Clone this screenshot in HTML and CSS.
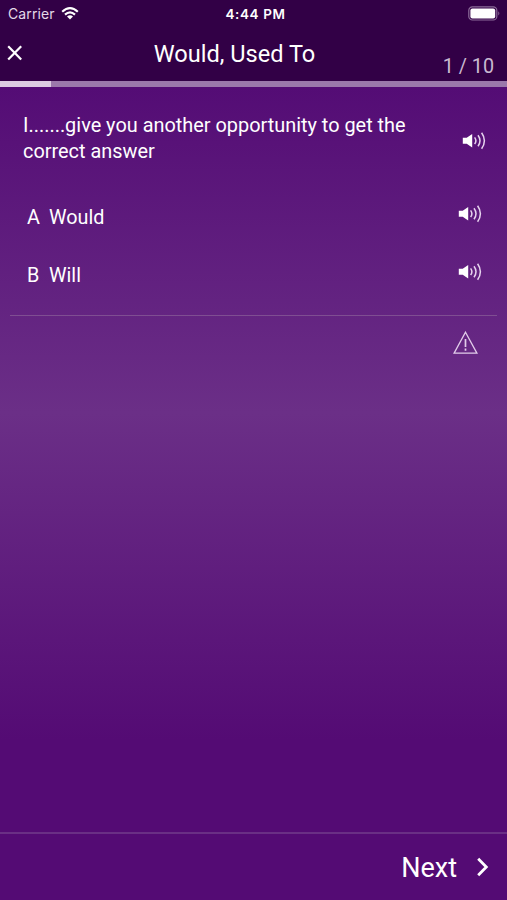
FILE: index.html
```
<!DOCTYPE html>
<html lang="en">
<head>
<meta charset="UTF-8">
<meta name="viewport" content="width=device-width, initial-scale=1.0">
<title>Would, Used To</title>
<link rel="stylesheet" href="styles.css">
</head>
<body>

<svg width="0" height="0" class="defs">
  <symbol id="speaker" viewBox="0 0 24 20">
    <path d="M0.8 6.8H4.7L10.2 3V16.4L4.7 12.8H0.8Z" fill="#fff"/>
    <path d="M12.6 6.4Q15.2 9.7 12.6 13M16 4.2Q20 9.7 16 15.2M19.6 1.8Q25.2 9.7 19.6 17.8" fill="none" stroke="#e6d3ee" stroke-width="1.5"/>
  </symbol>
</svg>

<div class="app">
  <header class="header">
    <div class="status-bar">
      <div class="carrier">
        <span>Carrier</span>
        <svg class="wifi" width="18" height="13" viewBox="0 0 18 13">
          <path d="M1.2 4.7Q9-2.3 16.8 4.7M4 7.6Q9 3.2 14 7.6" fill="none" stroke="#fff" stroke-width="2.2"/>
          <path d="M6 9.5Q9 7 12 9.5L9 12.6Z" fill="#fff"/>
        </svg>
      </div>
      <span class="time">4:44 PM</span>
      <svg class="battery" width="33" height="15" viewBox="0 0 33 15">
        <rect x="0.8" y="0.8" width="28" height="13.2" rx="3.6" fill="none" stroke="#8c6b99" stroke-width="1.2"/>
        <rect x="2.4" y="2.4" width="24.8" height="10" rx="2" fill="#fff"/>
        <path d="M30.3 5.2Q32.4 7.4 30.3 9.6Z" fill="#8c6b99"/>
      </svg>
    </div>
    <div class="title-bar">
      <svg class="close" width="16" height="16" viewBox="0 0 16 16">
        <path d="M1.2 1.2L14.2 14.6M14.2 1.2L1.2 14.6" fill="none" stroke="#fff" stroke-width="2.2"/>
      </svg>
      <h1 class="title">Would, Used To</h1>
      <span class="counter">1 / 10</span>
    </div>
    <div class="progress"><div class="progress-value" style="width: 10.1%"></div></div>
  </header>

  <main class="content">
    <div class="question">
      <p class="question-text">I.......give you another opportunity to get the correct answer</p>
      <svg class="speaker" width="24" height="20"><use href="#speaker"/></svg>
    </div>
    <div class="answer">
      <span class="letter">A</span>
      <span class="answer-text">Would</span>
      <svg class="speaker" width="24" height="20"><use href="#speaker"/></svg>
    </div>
    <div class="answer">
      <span class="letter">B</span>
      <span class="answer-text">Will</span>
      <svg class="speaker" width="24" height="20"><use href="#speaker"/></svg>
    </div>
    <div class="report">
      <svg width="26" height="24" viewBox="0 0 26 24">
        <path d="M12.5 1.2L23.9 22.2H1.1Z" fill="none" stroke="#e2cdea" stroke-width="1.3"/>
        <path d="M12.5 8V16M12.5 17.6V19.8" fill="none" stroke="#e2cdea" stroke-width="1.7"/>
      </svg>
    </div>
  </main>

  <footer class="footer">
    <span class="next">Next</span>
    <svg class="arrow" width="12" height="20" viewBox="0 0 12 20">
      <path d="M1.2 1.8L9.3 10L1.2 18.2" fill="none" stroke="#fff" stroke-width="2.8"/>
    </svg>
  </footer>
</div>

</body>
</html>
```
FILE: styles.css
```
* {
  box-sizing: border-box;
}
body {
  margin: 0;
  font-family: Roboto, "Liberation Sans", sans-serif;
  color: #fff;
}
svg {
  display: block;
  flex: none;
}
.defs {
  position: absolute;
}
.app {
  display: flex;
  flex-direction: column;
  height: 900px;
  background: linear-gradient(#540c75 87px, #6b2f87 413px, #540b74 740px);
}
.header {
  height: 87px;
  background: #320046;
}
.status-bar {
  display: grid;
  grid-template-columns: 1fr auto 1fr;
  align-items: center;
  height: 27px;
  padding: 0 6px 0 8px;
  font-family: Inter, sans-serif;
}
.carrier {
  display: flex;
  gap: 7px;
  font-size: 14px;
  letter-spacing: 0.1px;
  line-height: 18px;
  color: #e4d9e8;
}
.wifi {
  margin: 2px 0 0 -1px;
}
.time {
  padding-left: 2px;
  font-size: 13.5px;
  font-weight: 600;
  letter-spacing: 0.6px;
}
.battery {
  justify-self: end;
}
.title-bar {
  display: grid;
  grid-template-columns: 71px 1fr 109px;
  height: 54px;
}
.close {
  margin: 18px 0 0 7px;
}
.title {
  margin: 12px 0 0;
  font-size: 23.6px;
  font-weight: 400;
  line-height: 30px;
  text-align: center;
}
.counter {
  margin: 27px 13px 0 0;
  font-size: 19.8px;
  line-height: 26px;
  text-align: right;
  color: #c9b9d0;
}
.progress {
  height: 6px;
  background: #9b78ab;
}
.progress-value {
  height: 6px;
  background: #dccbe2;
}
.content {
  flex: 1;
}
.question {
  display: flex;
  justify-content: space-between;
  padding: 26px 21px 0 23px;
}
.question-text {
  width: 400px;
  margin: 0;
  font-size: 19.9px;
  line-height: 25.5px;
}
.question .speaker {
  margin-top: 18px;
}
.answer {
  display: flex;
  align-items: center;
  height: 58px;
  padding: 2px 25px 0 27px;
  font-size: 19.8px;
}
.question + .answer {
  margin-top: 23px;
}
.letter {
  width: 22px;
}
.answer-text {
  flex: 1;
}
.answer .speaker {
  margin-bottom: 7px;
}
.report {
  display: flex;
  justify-content: flex-end;
  margin: 12px 10px 0;
  padding: 15px 18px 0 0;
  border-top: 1px solid #7f4e92;
}
.footer {
  display: flex;
  justify-content: flex-end;
  align-items: center;
  gap: 20px;
  height: 68px;
  padding: 2px 18px 0 0;
  border-top: 2px solid #6a2f85;
}
.next {
  font-size: 27px;
}
.arrow {
  margin-bottom: 2px;
}
```
